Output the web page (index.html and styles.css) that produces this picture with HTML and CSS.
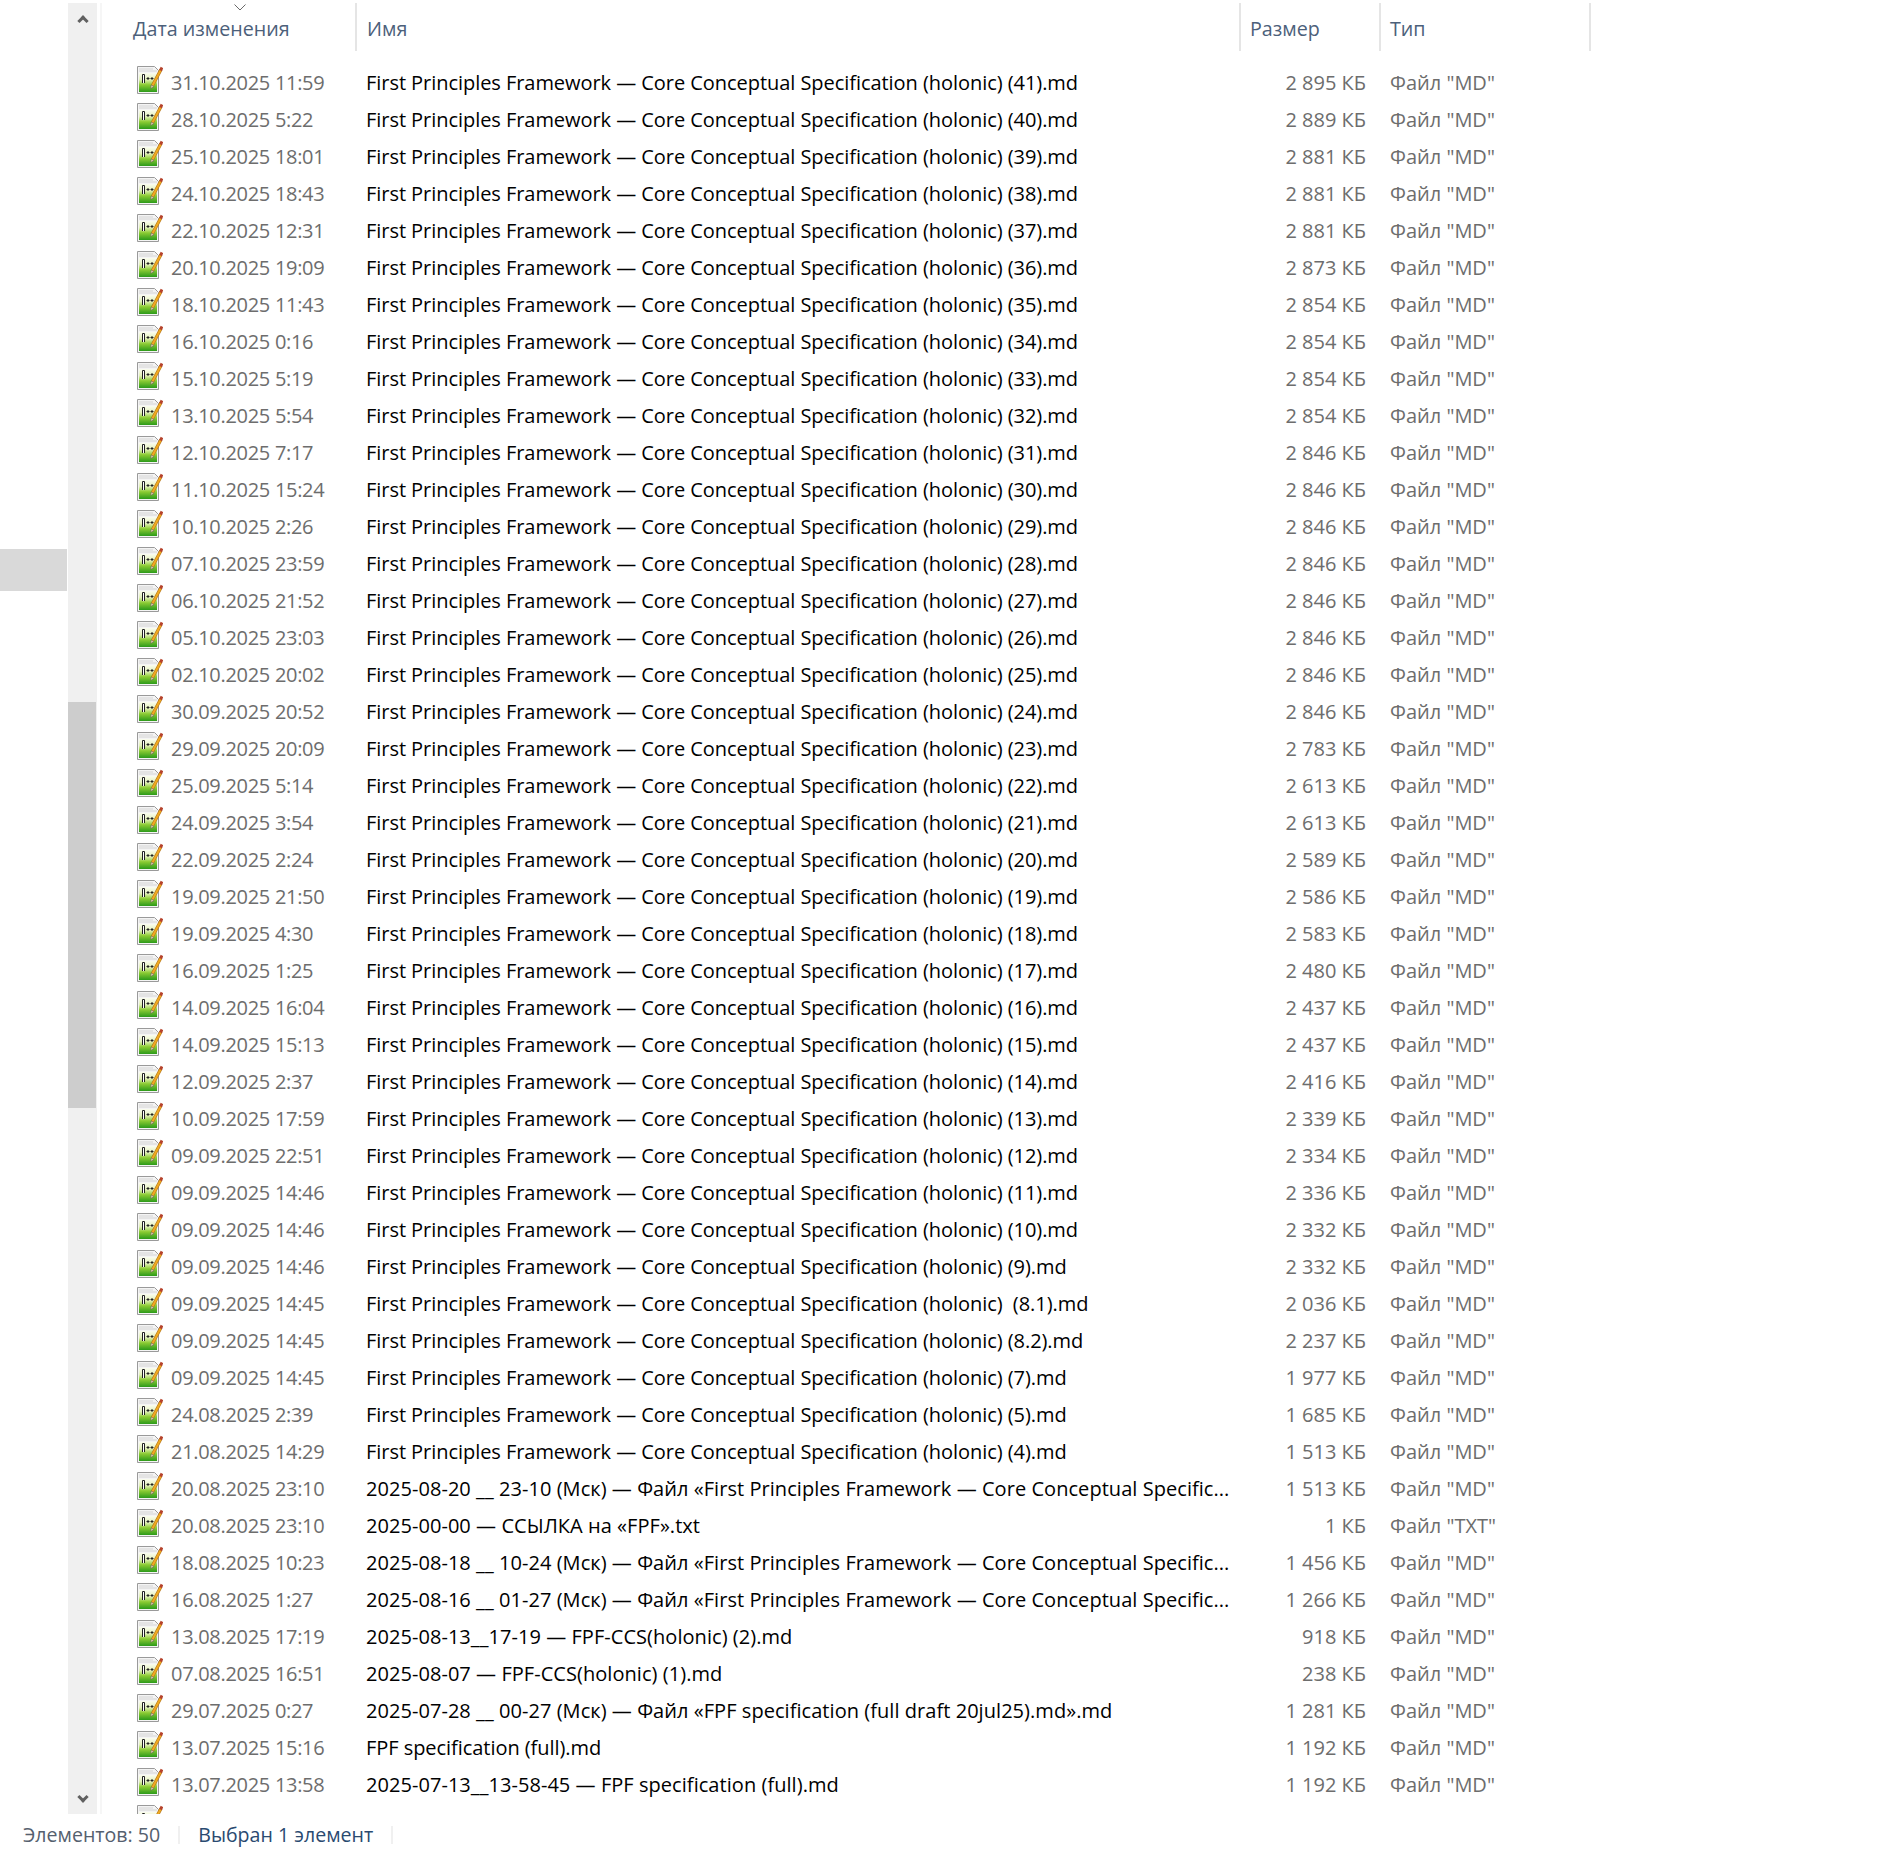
FILE: index.html
```html
<!DOCTYPE html>
<html lang="ru"><head><meta charset="utf-8"><title>Проводник</title><link rel="stylesheet" href="styles.css"></head><body>
<svg class="defs" width="0" height="0"><defs><linearGradient id="g" x1="0" y1="0" x2="0" y2="1"><stop offset="0" stop-color="#fbfdf0"/><stop offset=".35" stop-color="#e2f0b8"/><stop offset=".62" stop-color="#8ccc34"/><stop offset="1" stop-color="#2c9a1a"/></linearGradient>
<symbol id="md" viewBox="0 0 26 28"><path d="M.5 .5h17l4 4v23H.5z" fill="#f4f4f4" stroke="#9a9a9a"/><path d="M2.500 3h14M2.500 5h17" stroke="#b5b5b5" stroke-dasharray="1 1"/><rect x="2" y="7" width="18" height="19" fill="url(#g)"/><path d="M5.500 17V8.500h2V17" fill="#fff" stroke="#222"/><path d="M9.500 12.500h3M11 11v3M13.500 12.500h3M15 11v3" fill="none" stroke="#222"/><path d="M15.500 19.500L24 3.500" stroke="#b3741a" stroke-width="3.200"/><path d="M15.500 19.500L24 3.500" stroke="#f0aa22" stroke-width="2"/><path d="M23.500 4.500l1.500-3" stroke="#b5432c" stroke-width="3"/><path d="M13.700 22.500l.4-3.500 3 1.600z" fill="#e9d3a8" stroke="#555" stroke-width=".5"/></symbol></defs></svg>
<div class="app">
<aside class="nav"><div class="sel"></div></aside>
<div class="sb"><span class="ar up"></span><div class="thumb"></div><span class="ar dn"></span></div>
<div class="gap"></div>
<main class="list">
<svg class="sort" width="12" height="7" viewBox="0 0 12 7"><path d="M.5 .5L6 6l5.500-5.500" fill="none" stroke="#6a6a6a"/></svg>
<div class="hd"><div class="c1 h">Дата изменения</div><div class="c2 h">Имя</div><div class="c3 h">Размер</div><div class="c4 h">Тип</div></div>
<div class="rows">
<div class="r"><svg class="i"><use href="#md"/></svg><span class="d">31.10.2025 11:59</span><span class="n">First Principles Framework — Core Conceptual Specification (holonic) (41).md</span><span class="s">2 895 КБ</span><span class="t">Файл "MD"</span></div>
<div class="r"><svg class="i"><use href="#md"/></svg><span class="d">28.10.2025 5:22</span><span class="n">First Principles Framework — Core Conceptual Specification (holonic) (40).md</span><span class="s">2 889 КБ</span><span class="t">Файл "MD"</span></div>
<div class="r"><svg class="i"><use href="#md"/></svg><span class="d">25.10.2025 18:01</span><span class="n">First Principles Framework — Core Conceptual Specification (holonic) (39).md</span><span class="s">2 881 КБ</span><span class="t">Файл "MD"</span></div>
<div class="r"><svg class="i"><use href="#md"/></svg><span class="d">24.10.2025 18:43</span><span class="n">First Principles Framework — Core Conceptual Specification (holonic) (38).md</span><span class="s">2 881 КБ</span><span class="t">Файл "MD"</span></div>
<div class="r"><svg class="i"><use href="#md"/></svg><span class="d">22.10.2025 12:31</span><span class="n">First Principles Framework — Core Conceptual Specification (holonic) (37).md</span><span class="s">2 881 КБ</span><span class="t">Файл "MD"</span></div>
<div class="r"><svg class="i"><use href="#md"/></svg><span class="d">20.10.2025 19:09</span><span class="n">First Principles Framework — Core Conceptual Specification (holonic) (36).md</span><span class="s">2 873 КБ</span><span class="t">Файл "MD"</span></div>
<div class="r"><svg class="i"><use href="#md"/></svg><span class="d">18.10.2025 11:43</span><span class="n">First Principles Framework — Core Conceptual Specification (holonic) (35).md</span><span class="s">2 854 КБ</span><span class="t">Файл "MD"</span></div>
<div class="r"><svg class="i"><use href="#md"/></svg><span class="d">16.10.2025 0:16</span><span class="n">First Principles Framework — Core Conceptual Specification (holonic) (34).md</span><span class="s">2 854 КБ</span><span class="t">Файл "MD"</span></div>
<div class="r"><svg class="i"><use href="#md"/></svg><span class="d">15.10.2025 5:19</span><span class="n">First Principles Framework — Core Conceptual Specification (holonic) (33).md</span><span class="s">2 854 КБ</span><span class="t">Файл "MD"</span></div>
<div class="r"><svg class="i"><use href="#md"/></svg><span class="d">13.10.2025 5:54</span><span class="n">First Principles Framework — Core Conceptual Specification (holonic) (32).md</span><span class="s">2 854 КБ</span><span class="t">Файл "MD"</span></div>
<div class="r"><svg class="i"><use href="#md"/></svg><span class="d">12.10.2025 7:17</span><span class="n">First Principles Framework — Core Conceptual Specification (holonic) (31).md</span><span class="s">2 846 КБ</span><span class="t">Файл "MD"</span></div>
<div class="r"><svg class="i"><use href="#md"/></svg><span class="d">11.10.2025 15:24</span><span class="n">First Principles Framework — Core Conceptual Specification (holonic) (30).md</span><span class="s">2 846 КБ</span><span class="t">Файл "MD"</span></div>
<div class="r"><svg class="i"><use href="#md"/></svg><span class="d">10.10.2025 2:26</span><span class="n">First Principles Framework — Core Conceptual Specification (holonic) (29).md</span><span class="s">2 846 КБ</span><span class="t">Файл "MD"</span></div>
<div class="r"><svg class="i"><use href="#md"/></svg><span class="d">07.10.2025 23:59</span><span class="n">First Principles Framework — Core Conceptual Specification (holonic) (28).md</span><span class="s">2 846 КБ</span><span class="t">Файл "MD"</span></div>
<div class="r"><svg class="i"><use href="#md"/></svg><span class="d">06.10.2025 21:52</span><span class="n">First Principles Framework — Core Conceptual Specification (holonic) (27).md</span><span class="s">2 846 КБ</span><span class="t">Файл "MD"</span></div>
<div class="r"><svg class="i"><use href="#md"/></svg><span class="d">05.10.2025 23:03</span><span class="n">First Principles Framework — Core Conceptual Specification (holonic) (26).md</span><span class="s">2 846 КБ</span><span class="t">Файл "MD"</span></div>
<div class="r"><svg class="i"><use href="#md"/></svg><span class="d">02.10.2025 20:02</span><span class="n">First Principles Framework — Core Conceptual Specification (holonic) (25).md</span><span class="s">2 846 КБ</span><span class="t">Файл "MD"</span></div>
<div class="r"><svg class="i"><use href="#md"/></svg><span class="d">30.09.2025 20:52</span><span class="n">First Principles Framework — Core Conceptual Specification (holonic) (24).md</span><span class="s">2 846 КБ</span><span class="t">Файл "MD"</span></div>
<div class="r"><svg class="i"><use href="#md"/></svg><span class="d">29.09.2025 20:09</span><span class="n">First Principles Framework — Core Conceptual Specification (holonic) (23).md</span><span class="s">2 783 КБ</span><span class="t">Файл "MD"</span></div>
<div class="r"><svg class="i"><use href="#md"/></svg><span class="d">25.09.2025 5:14</span><span class="n">First Principles Framework — Core Conceptual Specification (holonic) (22).md</span><span class="s">2 613 КБ</span><span class="t">Файл "MD"</span></div>
<div class="r"><svg class="i"><use href="#md"/></svg><span class="d">24.09.2025 3:54</span><span class="n">First Principles Framework — Core Conceptual Specification (holonic) (21).md</span><span class="s">2 613 КБ</span><span class="t">Файл "MD"</span></div>
<div class="r"><svg class="i"><use href="#md"/></svg><span class="d">22.09.2025 2:24</span><span class="n">First Principles Framework — Core Conceptual Specification (holonic) (20).md</span><span class="s">2 589 КБ</span><span class="t">Файл "MD"</span></div>
<div class="r"><svg class="i"><use href="#md"/></svg><span class="d">19.09.2025 21:50</span><span class="n">First Principles Framework — Core Conceptual Specification (holonic) (19).md</span><span class="s">2 586 КБ</span><span class="t">Файл "MD"</span></div>
<div class="r"><svg class="i"><use href="#md"/></svg><span class="d">19.09.2025 4:30</span><span class="n">First Principles Framework — Core Conceptual Specification (holonic) (18).md</span><span class="s">2 583 КБ</span><span class="t">Файл "MD"</span></div>
<div class="r"><svg class="i"><use href="#md"/></svg><span class="d">16.09.2025 1:25</span><span class="n">First Principles Framework — Core Conceptual Specification (holonic) (17).md</span><span class="s">2 480 КБ</span><span class="t">Файл "MD"</span></div>
<div class="r"><svg class="i"><use href="#md"/></svg><span class="d">14.09.2025 16:04</span><span class="n">First Principles Framework — Core Conceptual Specification (holonic) (16).md</span><span class="s">2 437 КБ</span><span class="t">Файл "MD"</span></div>
<div class="r"><svg class="i"><use href="#md"/></svg><span class="d">14.09.2025 15:13</span><span class="n">First Principles Framework — Core Conceptual Specification (holonic) (15).md</span><span class="s">2 437 КБ</span><span class="t">Файл "MD"</span></div>
<div class="r"><svg class="i"><use href="#md"/></svg><span class="d">12.09.2025 2:37</span><span class="n">First Principles Framework — Core Conceptual Specification (holonic) (14).md</span><span class="s">2 416 КБ</span><span class="t">Файл "MD"</span></div>
<div class="r"><svg class="i"><use href="#md"/></svg><span class="d">10.09.2025 17:59</span><span class="n">First Principles Framework — Core Conceptual Specification (holonic) (13).md</span><span class="s">2 339 КБ</span><span class="t">Файл "MD"</span></div>
<div class="r"><svg class="i"><use href="#md"/></svg><span class="d">09.09.2025 22:51</span><span class="n">First Principles Framework — Core Conceptual Specification (holonic) (12).md</span><span class="s">2 334 КБ</span><span class="t">Файл "MD"</span></div>
<div class="r"><svg class="i"><use href="#md"/></svg><span class="d">09.09.2025 14:46</span><span class="n">First Principles Framework — Core Conceptual Specification (holonic) (11).md</span><span class="s">2 336 КБ</span><span class="t">Файл "MD"</span></div>
<div class="r"><svg class="i"><use href="#md"/></svg><span class="d">09.09.2025 14:46</span><span class="n">First Principles Framework — Core Conceptual Specification (holonic) (10).md</span><span class="s">2 332 КБ</span><span class="t">Файл "MD"</span></div>
<div class="r"><svg class="i"><use href="#md"/></svg><span class="d">09.09.2025 14:46</span><span class="n">First Principles Framework — Core Conceptual Specification (holonic) (9).md</span><span class="s">2 332 КБ</span><span class="t">Файл "MD"</span></div>
<div class="r"><svg class="i"><use href="#md"/></svg><span class="d">09.09.2025 14:45</span><span class="n">First Principles Framework — Core Conceptual Specification (holonic)  (8.1).md</span><span class="s">2 036 КБ</span><span class="t">Файл "MD"</span></div>
<div class="r"><svg class="i"><use href="#md"/></svg><span class="d">09.09.2025 14:45</span><span class="n">First Principles Framework — Core Conceptual Specification (holonic) (8.2).md</span><span class="s">2 237 КБ</span><span class="t">Файл "MD"</span></div>
<div class="r"><svg class="i"><use href="#md"/></svg><span class="d">09.09.2025 14:45</span><span class="n">First Principles Framework — Core Conceptual Specification (holonic) (7).md</span><span class="s">1 977 КБ</span><span class="t">Файл "MD"</span></div>
<div class="r"><svg class="i"><use href="#md"/></svg><span class="d">24.08.2025 2:39</span><span class="n">First Principles Framework — Core Conceptual Specification (holonic) (5).md</span><span class="s">1 685 КБ</span><span class="t">Файл "MD"</span></div>
<div class="r"><svg class="i"><use href="#md"/></svg><span class="d">21.08.2025 14:29</span><span class="n">First Principles Framework — Core Conceptual Specification (holonic) (4).md</span><span class="s">1 513 КБ</span><span class="t">Файл "MD"</span></div>
<div class="r"><svg class="i"><use href="#md"/></svg><span class="d">20.08.2025 23:10</span><span class="n x">2025-08-20 __ 23-10 (Мск) — Файл «First Principles Framework — Core Conceptual Specific...</span><span class="s">1 513 КБ</span><span class="t">Файл "MD"</span></div>
<div class="r"><svg class="i"><use href="#md"/></svg><span class="d">20.08.2025 23:10</span><span class="n x">2025-00-00 — ССЫЛКА на «FPF».txt</span><span class="s">1 КБ</span><span class="t">Файл "TXT"</span></div>
<div class="r"><svg class="i"><use href="#md"/></svg><span class="d">18.08.2025 10:23</span><span class="n x">2025-08-18 __ 10-24 (Мск) — Файл «First Principles Framework — Core Conceptual Specific...</span><span class="s">1 456 КБ</span><span class="t">Файл "MD"</span></div>
<div class="r"><svg class="i"><use href="#md"/></svg><span class="d">16.08.2025 1:27</span><span class="n x">2025-08-16 __ 01-27 (Мск) — Файл «First Principles Framework — Core Conceptual Specific...</span><span class="s">1 266 КБ</span><span class="t">Файл "MD"</span></div>
<div class="r"><svg class="i"><use href="#md"/></svg><span class="d">13.08.2025 17:19</span><span class="n x">2025-08-13__17-19 — FPF-CCS(holonic) (2).md</span><span class="s">918 КБ</span><span class="t">Файл "MD"</span></div>
<div class="r"><svg class="i"><use href="#md"/></svg><span class="d">07.08.2025 16:51</span><span class="n x">2025-08-07 — FPF-CCS(holonic) (1).md</span><span class="s">238 КБ</span><span class="t">Файл "MD"</span></div>
<div class="r"><svg class="i"><use href="#md"/></svg><span class="d">29.07.2025 0:27</span><span class="n x">2025-07-28 __ 00-27 (Мск) — Файл «FPF specification (full draft 20jul25).md».md</span><span class="s">1 281 КБ</span><span class="t">Файл "MD"</span></div>
<div class="r"><svg class="i"><use href="#md"/></svg><span class="d">13.07.2025 15:16</span><span class="n">FPF specification (full).md</span><span class="s">1 192 КБ</span><span class="t">Файл "MD"</span></div>
<div class="r"><svg class="i"><use href="#md"/></svg><span class="d">13.07.2025 13:58</span><span class="n x">2025-07-13__13-58-45 — FPF specification (full).md</span><span class="s">1 192 КБ</span><span class="t">Файл "MD"</span></div>
<div class="r"><svg class="i"><use href="#md"/></svg></div>
</div>
</main>
</div>
<footer class="st"><span class="a">Элементов: 50</span><span class="b">Выбран 1 элемент</span></footer>
</body></html>
```
FILE: styles.css
```css
*{box-sizing:border-box}
html,body{margin:0;padding:0;background:#fff}
body{font-family:"Open Sans","Noto Sans",sans-serif;font-size:20px;width:1887px;height:1854px;overflow:hidden}
.defs{display:block;height:0}
.app{display:flex;height:1814px;padding-top:3px}
.nav{width:68px;flex:none;padding-top:546px}
.sel{width:67px;height:42px;background:#d9d9d9}
.sb{width:29px;flex:none;background:#f0f0f0;position:relative}
.thumb{position:absolute;left:0;top:699px;width:28px;height:406px;background:#cdcdcd}
.ar{position:absolute;left:10.500px;width:8px;height:8px;border:solid #606060;border-width:3px 0 0 3px;transform:rotate(45deg)}
.up{top:14px}
.dn{bottom:13px;transform:rotate(225deg)}
.gap{width:5px;flex:none;margin-right:5px;border-right:2px solid #f6f6f6}
.list{flex:1;position:relative;overflow:hidden}
.sort{position:absolute;left:127px;top:1px}
.hd{display:flex;height:48px;color:#4c607a;font-size:19.700px}
.h{display:flex;align-items:center;padding-top:2px;border-right:2px solid #e5e5e5;white-space:nowrap}
.c1{width:250px;padding-left:26px}
.c2{width:884px;padding-left:10px}
.c3{width:140px;padding-left:9px}
.c4{width:210px;padding-left:9px}
.rows{padding-top:13px}
.r{display:flex;align-items:center;height:37px;white-space:nowrap}
.i{width:26px;height:28px;margin-left:30px;margin-top:-6px;flex:none}
.d{width:195px;margin-left:8px;color:#6d6d6d;flex:none;letter-spacing:-.3px}
.n{width:870px;color:#000;flex:none;white-space:pre;letter-spacing:-.05px}
.x{letter-spacing:.05px}
.s{width:130px;text-align:right;color:#6d6d6d;flex:none}
.t{color:#6d6d6d;flex:none;margin-left:24px}
.st{display:flex;align-items:center;height:40px;padding:2px 0 0 23px;line-height:18px;font-size:19.600px}
.a{padding-right:18px;border-right:2px solid #f0f0f0;color:#55606e}
.b{padding:0 18px;border-right:2px solid #f0f0f0;color:#2a4a70}
```
